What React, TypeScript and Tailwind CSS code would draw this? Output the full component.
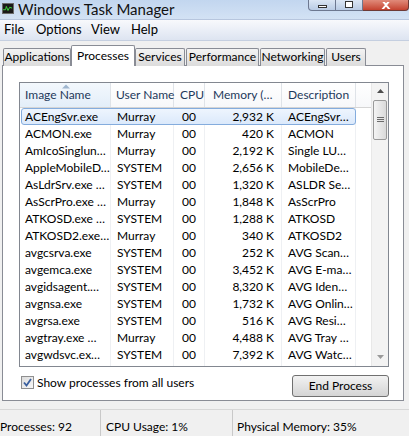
import React from "react";

const rows = [
  ["ACEngSvr.exe", "Murray", "00", "2,932 K", "ACEngSvr…"],
  ["ACMON.exe", "Murray", "00", "420 K", "ACMON"],
  ["AmIcoSinglun…", "Murray", "00", "2,192 K", "Single LU…"],
  ["AppleMobileD…", "SYSTEM", "00", "2,656 K", "MobileDe…"],
  ["AsLdrSrv.exe …", "SYSTEM", "00", "1,320 K", "ASLDR Se…"],
  ["AsScrPro.exe …", "Murray", "00", "1,848 K", "AsScrPro"],
  ["ATKOSD.exe …", "SYSTEM", "00", "1,288 K", "ATKOSD"],
  ["ATKOSD2.exe…", "Murray", "00", "340 K", "ATKOSD2"],
  ["avgcsrva.exe", "SYSTEM", "00", "252 K", "AVG Scan…"],
  ["avgemca.exe", "SYSTEM", "00", "3,452 K", "AVG E-ma…"],
  ["avgidsagent.…", "SYSTEM", "00", "8,320 K", "AVG Iden…"],
  ["avgnsa.exe", "SYSTEM", "00", "1,732 K", "AVG Onlin…"],
  ["avgrsa.exe", "SYSTEM", "00", "516 K", "AVG Resi…"],
  ["avgtray.exe …", "Murray", "00", "4,488 K", "AVG Tray …"],
  ["avgwdsvc.ex…", "SYSTEM", "00", "7,392 K", "AVG Watc…"],
];

const tabs = [
  { t: "Applications", w: "w-[68px]" },
  { t: "Processes", w: "w-[64px]" },
  { t: "Services", w: "w-[50px]" },
  { t: "Performance", w: "w-[73px]" },
  { t: "Networking", w: "w-[65px]" },
  { t: "Users", w: "w-[40px]" },
];

export default function App() {
  return (
    <div className="w-[409px] h-[436px] overflow-hidden bg-[#f0f0f0] flex flex-col text-[12px] text-black" style={{ fontFamily: 'Lato, "Liberation Sans", sans-serif' }}>
      {/* Title bar */}
      <div className="h-[20px] flex items-start bg-gradient-to-b from-[#c2d6ef] to-[#d3e2f4] relative">
        <div className="mt-[3px] ml-[2px] w-[12px] h-[11px] bg-[#1a1a1a] border border-[#6b6b6b]">
          <svg viewBox="0 0 12 11" className="w-full h-full">
            <path d="M0 7 L3 7 L4 3 L6 8 L8 4 L11 5" stroke="#3bd63b" strokeWidth="1.2" fill="none" />
          </svg>
        </div>
        <div className="ml-[4px] text-[15px] leading-[18px] text-[#111]">Windows Task Manager</div>
        <div className="ml-auto flex h-[11px]">
          <div className="w-[28px] border border-t-0 border-[#6d7890] rounded-bl-[4px] bg-gradient-to-b from-[#dbe6f4] to-[#b9cbe4] flex items-end justify-center pb-[2px]">
            <div className="w-[9px] h-[3px] bg-white border border-[#333]" />
          </div>
          <div className="w-[27px] border border-l-0 border-t-0 border-[#6d7890] bg-gradient-to-b from-[#dbe6f4] to-[#b9cbe4] flex items-end justify-center pb-[2px]">
            <div className="w-[8px] h-[7px] bg-white border border-[#333]" />
          </div>
          <div className="w-[46px] border border-l-0 border-t-0 border-[#6d3a36] rounded-br-[4px] bg-gradient-to-b from-[#e08a7a] to-[#c4412f] flex items-end justify-center overflow-hidden">
            <svg width="10" height="7" viewBox="0 0 10 7" className="mb-[1px]">
              <path d="M1 -2 L5 3 L9 -2 M5 3 L1 8 M5 3 L9 8" stroke="white" strokeWidth="2" fill="none" />
            </svg>
          </div>
        </div>
      </div>

      {/* Menu bar */}
      <div className="h-[22px] flex items-center px-[4px] text-[13px] bg-gradient-to-b from-[#f8f9fc] to-[#dde4f1] border-t border-[#b7c6de] border-b border-b-[#c5cfe0]">
        <span className="w-[32px]">File</span>
        <span className="w-[55px]">Options</span>
        <span className="w-[40px]">View</span>
        <span>Help</span>
      </div>

      {/* Tabs */}
      <div className="mt-[4px] flex items-end h-[21px] pl-[3px] relative z-10">
        {tabs.map(({ t, w }) => {
          const sel = t === "Processes";
          return sel ? (
            <div key={t} className={`${w} h-[21px] border border-b-0 border-[#898c95] bg-white flex items-center justify-center text-[12px] -ml-[1px] rounded-t-[2px]`}>
              {t}
            </div>
          ) : (
            <div key={t} className={`${w} h-[18px] mr-[1px] border border-b-0 border-[#898c95] bg-gradient-to-b from-[#f3f3f3] to-[#dcdcdc] flex items-center justify-center text-[12px] rounded-t-[2px]`}>
              {t}
            </div>
          );
        })}
      </div>

      {/* Tab panel */}
      <div className="ml-[2px] w-[402px] h-[346px] -mt-[1px] bg-white border border-[#898c95] pt-[16px] pl-[16px]">
        <div className="w-[370px] h-[285px] border border-[#828790] flex">
          <div className="flex-1 flex flex-col">
            {/* Header */}
            <div className="h-[25px] flex text-[12px] text-[#1e395b] bg-gradient-to-b from-white to-[#f7f8fa] border-b border-[#d5d5d5]">
              <div className="w-[91px] relative border-r border-[#dfe3e8] pl-[5px] flex items-center bg-gradient-to-b from-[#f3f8fd] to-[#e3eef9]">
                Image Name
                <svg className="absolute left-[42px] top-[1px]" width="8" height="5" viewBox="0 0 8 5">
                  <path d="M0 4.5 L4 0.5 L8 4.5 Z" fill="#9fb6cf" />
                </svg>
              </div>
              <div className="w-[63px] border-r border-[#dfe3e8] pl-[5px] flex items-center whitespace-nowrap">User Name</div>
              <div className="w-[31px] border-r border-[#dfe3e8] pl-[6px] flex items-center">CPU</div>
              <div className="w-[77px] border-r border-[#dfe3e8] pl-[8px] flex items-center whitespace-nowrap">Memory (…</div>
              <div className="w-[74px] border-r border-[#dfe3e8] pl-[6px] flex items-center">Description</div>
              <div className="flex-1" />
            </div>
            {/* Rows */}
            <div className="flex-1 relative">
              <div className="absolute inset-0 flex pointer-events-none">
                <div className="w-[91px] border-r border-[#eef0f3]" />
                <div className="w-[63px] border-r border-[#eef0f3]" />
                <div className="w-[31px] border-r border-[#eef0f3]" />
                <div className="w-[77px] border-r border-[#eef0f3]" />
                <div className="w-[74px] border-r border-[#eef0f3]" />
              </div>
              {rows.map((r, i) => (
                <div key={i} className="relative h-[17px] flex items-center text-[12px] leading-[17px]">
                  {i === 0 && (
                    <div className="absolute left-[1px] top-0 w-[335px] h-[17px] rounded-[3px] border border-[#84acdd] bg-gradient-to-b from-[#eef5fe] to-[#dbe9fb]" />
                  )}
                  <div className="relative w-[91px] pl-[5px] whitespace-nowrap overflow-hidden">{r[0]}</div>
                  <div className="relative w-[63px] pl-[6px] whitespace-nowrap">{r[1]}</div>
                  <div className="relative w-[31px] pr-[9px] text-right">{r[2]}</div>
                  <div className="relative w-[77px] pr-[8px] text-right whitespace-nowrap">{r[3]}</div>
                  <div className="relative w-[74px] pl-[6px] whitespace-nowrap overflow-hidden">{r[4]}</div>
                </div>
              ))}
            </div>
          </div>
          {/* Scrollbar */}
          <div className="w-[17px] bg-[#f3f3f3] border-l border-[#e8e8e8] flex flex-col">
            <div className="h-[17px] flex items-center justify-center">
              <svg width="7" height="4" viewBox="0 0 7 4"><path d="M0 4 L3.5 0 L7 4 Z" fill="#4d4d4d" /></svg>
            </div>
            <div className="mx-[1px] h-[40px] rounded-[2px] border border-[#9a9a9a] bg-gradient-to-r from-[#f4f4f4] to-[#dadada] flex items-center justify-center">
              <div className="flex flex-col gap-[1px]">
                <div className="w-[7px] h-[1px] bg-[#6b6b6b]" />
                <div className="w-[7px] h-[1px] bg-[#6b6b6b]" />
                <div className="w-[7px] h-[1px] bg-[#6b6b6b]" />
              </div>
            </div>
            <div className="flex-1" />
            <div className="h-[17px] flex items-center justify-center">
              <svg width="7" height="4" viewBox="0 0 7 4"><path d="M0 0 L3.5 4 L7 0 Z" fill="#9a9a9a" /></svg>
            </div>
          </div>
        </div>

        {/* Bottom controls */}
        <div className="mt-[8px] w-[370px] flex items-start">
          <div className="mt-[1px] ml-[2px] w-[13px] h-[13px] border border-[#8f8f8f] bg-gradient-to-br from-[#dcdcdc] to-[#f8f8f8] flex items-center justify-center">
            <svg width="9" height="9" viewBox="0 0 9 9"><path d="M1 4.5 L3.5 7.5 L8 1" stroke="#3a5f9e" strokeWidth="1.8" fill="none" /></svg>
          </div>
          <span className="ml-[3px] text-[12px] leading-[15px]">Show processes from all users</span>
          <div className="ml-auto w-[97px] h-[22px] rounded-[3px] border border-[#707070] bg-gradient-to-b from-[#f2f2f2] to-[#d4d4d4] flex items-center justify-center text-[12px]">
            End Process
          </div>
        </div>
      </div>

      {/* Status bar */}
      <div className="mt-[8px] flex-1 flex items-start border-t border-[#d7d7d7] text-[12px] bg-[#f0f0f0]">
        <div className="w-[101px] border-r border-[#c9c9c9] h-full pt-[8px]">Processes: 92</div>
        <div className="w-[132px] border-r border-[#c9c9c9] h-full pt-[8px] pl-[5px]">CPU Usage: 1%</div>
        <div className="pl-[4px] pt-[8px]">Physical Memory: 35%</div>
      </div>
    </div>
  );
}
